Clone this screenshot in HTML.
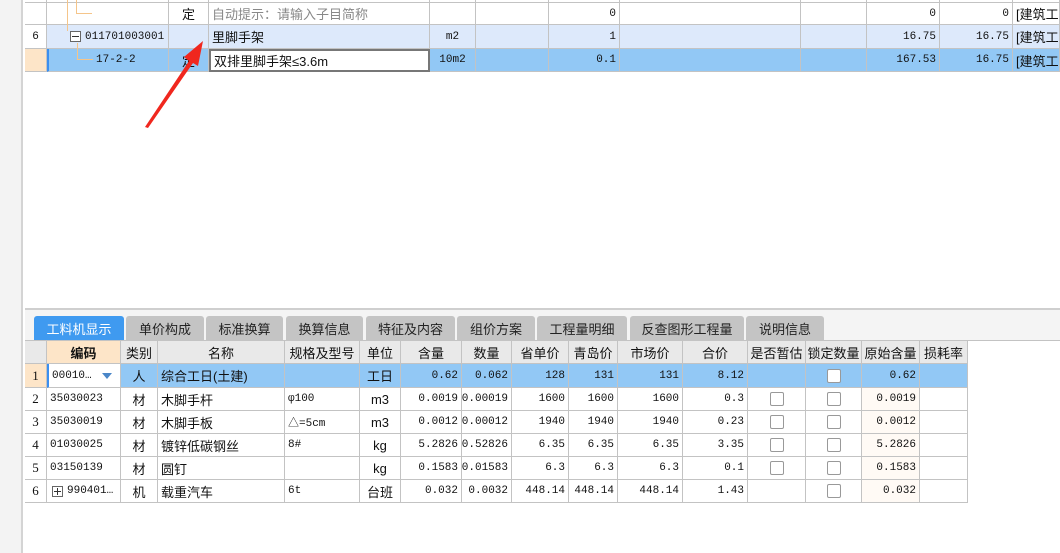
<!DOCTYPE html>
<html><head><meta charset="utf-8"><style>
*{margin:0;padding:0;box-sizing:border-box}
body{width:1060px;height:553px;overflow:hidden;background:#fff;position:relative;font-family:"Liberation Sans","Noto Sans CJK SC",sans-serif;font-size:13px;color:#111}
.a{position:absolute}
.strip{left:0;top:0;width:23px;height:553px;background:#f3f3f3;border-right:2px solid #d4d4d4}
.c{position:absolute;border-right:1px solid #c3c3c3;border-bottom:1px solid #c3c3c3;white-space:nowrap;overflow:hidden;padding:0 3px;display:flex;align-items:center}
.c span{flex-shrink:0}
.r{justify-content:flex-end}
.m{justify-content:center}
.n{font-family:"Liberation Mono","Noto Sans CJK SC",monospace;font-size:11px}
.tab{position:absolute;top:316px;height:24px;background:#c4c4c4;border-radius:3px 3px 0 0;display:flex;align-items:center;justify-content:center;font-size:13px;color:#222}
.cb{width:14px;height:14px;border:1px solid #999;border-radius:2px;background:#fff}
svg{z-index:10}
</style></head><body>
<div class="a strip"></div>

<div class="a" style="left:25px;top:308px;width:1035px;height:2px;background:#cfcfcf"></div>
<div class="a" style="left:25px;top:310px;width:1035px;height:30px;background:#f4f4f4"></div>
<div class="tab" style="left:34px;width:90px;background:#3f9af0;color:#fff">工料机显示</div>
<div class="tab" style="left:126px;width:78px">单价构成</div>
<div class="tab" style="left:206px;width:77px">标准换算</div>
<div class="tab" style="left:286px;width:77px">换算信息</div>
<div class="tab" style="left:366px;width:89px">特征及内容</div>
<div class="tab" style="left:457px;width:78px">组价方案</div>
<div class="tab" style="left:537px;width:90px">工程量明细</div>
<div class="tab" style="left:630px;width:114px">反查图形工程量</div>
<div class="tab" style="left:746px;width:78px">说明信息</div>
<div class="a" style="left:25px;top:340px;width:1035px;height:1px;background:#c3c3c3"></div>

<svg class="a" style="left:0;top:0" width="1060" height="553">
<polygon points="145,127 189,61 184,57 203,41 198,66 193,63 148,128" fill="#f0271e"/>
</svg>

<script>
function cell(p,x1,x2,y1,y2,txt,cls,st){
 var d=document.createElement('div');d.className='c '+(cls||'');
 d.style.cssText='left:'+x1+'px;top:'+y1+'px;width:'+(x2-x1)+'px;height:'+(y2-y1)+'px;'+(st||'');
 d.innerHTML=txt;document.body.appendChild(d);return d;}
var tx=[25,47,169,209,430,476,549,620,801,867,940,1013,1060];
var ty=[-20,3,25,49,72];
var box='<span style="display:inline-block;width:11px;height:11px;border:1px solid #666;margin-left:20px;margin-right:4px;position:relative;background:#fff"><span style="position:absolute;left:1px;top:4px;width:7px;height:1px;background:#333"></span></span>';
var trows=[
 {bg:'#fff',c:['','','','','','','','','','','0',''] },
 {bg:'#fff',c:['','','定','<span style="color:#888">自动提示：请输入子目简称</span>','','','0','','','0','0','[建筑工程'] },
 {bg:'#dde9fb',c:['6',box+'<span class="n">011701003001</span>','','里脚手架','m2','','1','','','16.75','16.75','[建筑工程'] },
 {bg:'#92c8f5',c:['','<span class="n" style="margin-left:44px">17-2-2</span>','定','双排里脚手架≤3.6m','10m2','','0.1','','','167.53','16.75','[建筑工程'] }
];
for(var r=0;r<4;r++){
 for(var i=0;i<12;i++){
  var t=trows[r].c[i];var bg=trows[r].bg;
  if(i==0){bg=(r==3?'#fde5c8':'#fff');}
  var cls='';
  if(i==0||i==2||i==4||i==5)cls='m n';
  if(i==2)cls='m';
  if(i>=6&&i<=10)cls='r n';
  var d=cell(0,tx[i],tx[i+1],ty[r],ty[r+1],t,cls,'background:'+bg+';');
  if(r==3&&i==3){d.style.border='2px solid #777';d.style.background='#fff';}
  if(r==3&&i==1){d.style.borderLeft='2px solid #3b8ff0';}
 }
}
function ln(x,y,w,h){var d=document.createElement('div');d.className='a';d.style.cssText='left:'+x+'px;top:'+y+'px;width:'+w+'px;height:'+h+'px;background:#f5c58a';document.body.appendChild(d);}
ln(67,0,1,31);ln(76,0,1,14);ln(76,13,16,1);ln(77,43,1,17);ln(77,59,16,1);
var bx=[25,47,121,158,285,360,401,462,512,569,618,683,748,806,862,920,968];
var by=[341,364,388,411,434,457,480,503];
var hd=['','编码','类别','名称','规格及型号','单位','含量','数量','省单价','青岛价','市场价','合价','是否暂估','锁定数量','原始含量','损耗率'];
var rows=[
 ['1','00010…','人','综合工日(土建)','','工日','0.62','0.062','128','131','131','8.12','','B','0.62',''],
 ['2','35030023','材','木脚手杆','φ100','m3','0.0019','0.00019','1600','1600','1600','0.3','B','B','0.0019',''],
 ['3','35030019','材','木脚手板','△=5cm','m3','0.0012','0.00012','1940','1940','1940','0.23','B','B','0.0012',''],
 ['4','01030025','材','镀锌低碳钢丝','8#','kg','5.2826','0.52826','6.35','6.35','6.35','3.35','B','B','5.2826',''],
 ['5','03150139','材','圆钉','','kg','0.1583','0.01583','6.3','6.3','6.3','0.1','B','B','0.1583',''],
 ['6','990401…','机','载重汽车','6t','台班','0.032','0.0032','448.14','448.14','448.14','1.43','','B','0.032','']
];
for(var i=0;i<16;i++){
 var bg=i==1?'#fde5c8':'#e9e9e9';
 cell(0,bx[i],bx[i+1],by[0],by[1],hd[i],'m',(i==1?'font-weight:bold;':'')+'background:'+bg+';font-size:13px');
}
for(var r=0;r<6;r++){
 for(var i=0;i<16;i++){
  var t=rows[r][i];var bg=r==0?'#92c8f5':'#fff';
  if(i==14&&r>0)bg='#fffaf5';
  if(i==0&&r==0)bg='#fde5c8';
  var cls='';
  if(i==0||i==2||i==5||i==12||i==13)cls='m';
  if(i>=6&&i<=11||i==14)cls='r n';
  if(i==1||i==4)cls='n';
  if(t=='B')t='<span class="cb"></span>';
  if(r==5&&i==1)t='<span style="display:inline-block;width:11px;height:11px;border:1px solid #666;margin-right:4px;position:relative;margin-left:2px"><span style="position:absolute;left:1px;top:4px;width:7px;height:1px;background:#333"></span><span style="position:absolute;left:4px;top:1px;width:1px;height:7px;background:#333"></span></span>'+t;
  if(r==0&&i==1)t=t+'<span style="position:absolute;right:8px;top:9px;border-left:5px solid transparent;border-right:5px solid transparent;border-top:6px solid #4a86c8"></span>';
  var d=cell(0,bx[i],bx[i+1],by[r+1],by[r+2],t,cls,'background:'+bg+';');
  if(r==0&&i==1){d.style.background='#fff';d.style.borderLeft='2px solid #3b8ff0';}
  if(i==0){d.style.fontFamily='"Liberation Serif",serif';}
 }
}
</script>
</body></html>
